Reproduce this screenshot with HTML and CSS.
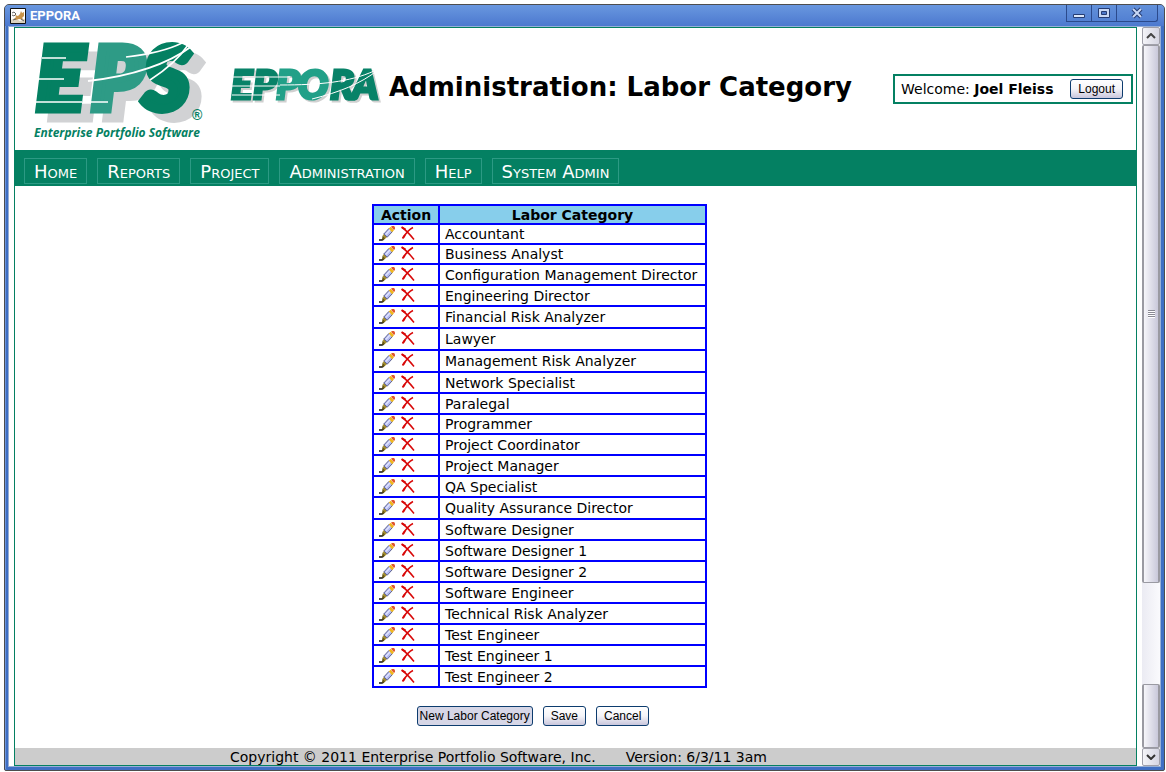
FILE: index.html
```html
<!DOCTYPE html>
<html lang="en">
<head>
<meta charset="utf-8">
<title>EPPORA</title>
<link rel="stylesheet" href="styles.css">
</head>
<body>
<svg class="defs" aria-hidden="true">
  <symbol id="edit" viewBox="0 0 16 15">
    <path d="M0 14H3L5 13" fill="none" stroke="#111" stroke-width="1.500"/>
    <path d="M3 13.500L3.600 9.400L6.600 12L4.500 14Z" fill="#6b5a10"/>
    <path d="M3.800 9.600L5.200 7.500L8.500 10.600L6.400 12.500Z" fill="#a8902a"/>
    <path d="M4.800 8L10.200 2.200L13.600 5.400L8.200 11.200Z" fill="#b3baf0" stroke="#5c6192"/>
    <path d="M6.800 8.400L11.400 3.600" stroke="#dfe2ff" stroke-width="1.500"/>
    <path d="M9.800 2.600L11.600 .8L15 4.200L13 6.200Z" fill="#f0b81c"/>
    <path d="M12 .8L13 0H15L16 1.200V3L15 4Z" fill="#e0552f"/>
  </symbol>
  <symbol id="delete" viewBox="0 0 14 15">
    <path d="M1 1.500C5 4 8.500 8 13 13.500M12 1.500C7 4 4 8.500 1.500 12.500" fill="none" stroke="#d80808" stroke-width="1.500"/>
    <path d="M.5 1L4.500 3.500M2 12L4 9" stroke="#d80808" stroke-width="2"/>
  </symbol>
</svg>
<div class="window">
  <div class="titlebar">
    <svg class="app-icon" viewBox="0 0 16 16" aria-hidden="true">
      <path d="M.5.5H15.500V15.500H.5Z" fill="#fff" stroke="#111"/>
      <path d="M1 12L5 10L10 13L15 11V15H1Z" fill="#dcd3c0"/>
      <path d="M4 11L6 9L5 7L8 8L10 6L11 3L12 5L14 4V8L12 10L14 12L9 11L6 12Z" fill="#c9934a"/>
      <path d="M2 5L4 4L6 6L4 8L2 7M3 12L6 11M11 11L14 13" fill="none" stroke="#666"/>
    </svg>
    <span class="window-title">EPPORA</span>
    <div class="window-controls">
      <button aria-label="Minimize"><svg viewBox="0 0 12 12"><path d="M.5 7.500H11.500V10.500H.5Z" fill="#dbe7fa" stroke="#253c73"/></svg></button>
      <button aria-label="Maximize"><svg viewBox="0 0 12 12"><path d="M.5 1.500H11.500V10.500H.5Z" fill="#c8d8f5" stroke="#253c73"/><path d="M3.500 4.500H8.500V7.500H3.500Z" fill="#4d78ca" stroke="#253c73"/></svg></button>
      <button class="close" aria-label="Close"><svg viewBox="0 0 12 12"><path d="M2 2L10 10M10 2L2 10" stroke="#253c73" stroke-width="4"/><path d="M2 2L10 10M10 2L2 10" stroke="#c8d8f5" stroke-width="2"/></svg></button>
    </div>
  </div>
  <div class="viewport">
    <div class="page">
      <header class="header">
        <div class="brand">
          <svg class="eps" viewBox="0 0 178 88" role="img" aria-label="EPS">
            <text class="eps-letters" x="5" y="73">E<tspan class="light" x="60">P</tspan><tspan x="112">S</tspan></text>
            <g fill="none" stroke="#fff" stroke-width="1.600">
              <path d="M10 22H34M7 43H32M4 66H50M54 66H76"/>
              <path d="M94 21C112 19 134 15 150 7"/>
              <path d="M56 45C82 42 128 34 160 10" stroke-width="2"/>
              <path d="M118 44C132 35 146 24 156 9"/>
            </g>
            <text class="registered" x="160" y="84">®</text>
          </svg>
          <div class="tagline">Enterprise Portfolio Software</div>
        </div>
        <svg class="eppora" viewBox="0 0 156 40" role="img" aria-label="EPPORA">
          <text class="word" x="1" y="33">E<tspan x="23">P</tspan><tspan class="light" x="46">P</tspan><tspan class="light" x="68">O</tspan><tspan x="100">R</tspan><tspan x="122">A</tspan></text>
          <path d="M2 11H60M2 20H50M2 29H50M50 19C90 19 120 16 144 5M82 33C110 26 130 18 148 4" fill="none" stroke="#fff"/>
        </svg>
        <h1>Administration: Labor Category</h1>
        <div class="welcome"><span>Welcome: <b>Joel Fleiss</b></span><button class="btn">Logout</button></div>
      </header>
      <nav class="nav">
        <a href="#">Home</a><a href="#">Reports</a><a href="#">Project</a><a href="#">Administration</a><a href="#">Help</a><a href="#">System Admin</a>
      </nav>
      <main class="main">
        <table class="categories">
          <thead><tr><th scope="col" class="action">Action</th><th scope="col">Labor Category</th></tr></thead>
          <tbody id="rows"></tbody>
        </table>
        <div class="actions">
          <button class="btn active">New Labor Category</button><button class="btn">Save</button><button class="btn">Cancel</button>
        </div>
      </main>
      <footer class="footer"><span>Copyright © 2011 Enterprise Portfolio Software, Inc.</span><span>Version: 6/3/11 3am</span></footer>
    </div>
    <div class="scrollbar" aria-hidden="true">
      <div class="arrow"><svg viewBox="0 0 10 6"><path d="M1 5L5 1L9 5" fill="none" stroke="#444" stroke-width="2"/></svg></div>
      <div class="thumb"><i class="grip"></i></div>
      <div class="track"></div>
      <div class="thumb lower"></div>
      <div class="arrow"><svg viewBox="0 0 10 6"><path d="M1 1L5 5L9 1" fill="none" stroke="#333" stroke-width="2"/></svg></div>
    </div>
  </div>
</div>
<script src="app.js"></script>
</body>
</html>
```
FILE: styles.css
```css
* { box-sizing: border-box; }
body { margin: 0; background: #fff; font-family: Verdana, "DejaVu Sans", sans-serif; font-size: 14px; color: #000; }
button { font: inherit; cursor: pointer; }
.defs { display: none; }
.window {
  min-height: calc(100vh - 5px); margin: 4px 1px 1px 4px; display: flex; flex-direction: column;
  border: 1px solid #4d4d4d; border-radius: 5px 5px 2px 2px; background: #3f6fc4; padding: 0 3px 3px;
  box-shadow: inset 1px 0 #6f97da;
}
.titlebar { display: flex; align-items: center; height: 21px; margin: 0 -3px; padding-left: 5px; gap: 4px; border-radius: 4px 4px 0 0; background: linear-gradient(#6997df, #4c79cf); }
.app-icon { width: 16px; height: 16px; }
.window-title { font: bold 13px Roboto, sans-serif; color: #fff; flex: 1; }
.window-controls { display: flex; align-self: flex-start; margin-right: 6px; }
.window-controls button { width: 25px; height: 17px; padding: 0; border: solid #2b4a8c; border-width: 0 0 1px 1px; background: linear-gradient(#6391da, #5280d2); display: grid; place-items: center; }
.window-controls button.close { width: 42px; border-right-width: 1px; border-radius: 0 0 3px 0; }
.window-controls svg { width: 12px; height: 12px; }
.viewport { flex: 1; display: flex; background: #fff; border: 1px solid #96afd6; }
.page { flex: 1; margin-left: 5px; border: 1px solid #048062; display: flex; flex-direction: column; }
.header { display: flex; align-items: flex-start; height: 122px; padding: 8px 3px 0 17px; }
.brand { width: 198px; }
.eps { display: block; width: 178px; height: 88px; overflow: visible; }
.eps-letters { font: italic 900 86px Lato, sans-serif; fill: #048062; stroke: #048062; stroke-width: 9px; filter: drop-shadow(12px 9px #d1d2d4); }
.eps-letters .light { fill: #2e9b86; stroke: #2e9b86; }
.eps .registered { font: bold 14px "Liberation Sans", sans-serif; fill: #048062; }
.tagline { padding-left: 2px; font: italic bold 12px/18px "Open Sans", sans-serif; color: #048062; white-space: nowrap; }
.eppora { width: 156px; height: 40px; margin-top: 30px; overflow: visible; }
.word { font: italic 900 40px Lato, sans-serif; fill: #088268; stroke: #088268; stroke-width: 3px; filter: drop-shadow(2px 2px #d0d0d0); }
.word .light { fill: #22a088; stroke: #22a088; }
h1 { margin: 35px 0 0 3px; font-size: 26px; line-height: 32px; white-space: nowrap; }
.welcome { margin: 38px 0 0 auto; width: 240px; height: 30px; padding: 0 8px 0 6px; border: 2px solid #048062; display: flex; align-items: center; justify-content: space-between; white-space: nowrap; }
.btn { height: 20px; padding: 0 7px; border: 1px solid #0d3c6e; border-radius: 3px; background: linear-gradient(#fff, #f4f4f8 50%, #c9c6dc); font: 12px/16px "Liberation Sans", Arial, sans-serif; color: #000; white-space: nowrap; }
.btn.active { padding: 0 2px; background: #d6d6e6; }
.nav { display: flex; gap: 10px; height: 36px; padding: 8px 9px 2px; background: #048062; }
.nav a { height: 26px; padding: 0 9px; border: 1px solid #2c9a84; color: #fff; font-size: 18px; line-height: 25px; font-variant: small-caps; text-decoration: none; white-space: nowrap; }
.main { flex: 1; padding: 18px 72px 0 0; display: flex; flex-direction: column; align-items: center; }
.categories { width: 335px; border-collapse: collapse; }
.categories th, .categories td { border: 2px solid #00f; padding: 0 5px; line-height: 16px; text-align: left; white-space: nowrap; }
.categories th { height: 19px; background: #87ceeb; text-align: center; }
.categories .action { width: 66px; padding: 0 4px; }
.categories td { height: 21px; }
.categories .short td { height: 20px; }
.categories .tall td { height: 22px; }
.tools { display: flex; align-items: flex-start; gap: 6px; height: 16px; }
.tools button { height: 15px; padding: 0; border: 0; background: none; }
.tools svg { display: block; height: 15px; }
.edit-icon { width: 16px; }
.delete-icon { width: 14px; }
.actions { display: flex; gap: 10px; padding: 18px 13px 20px 0; }
.footer { display: flex; gap: 30px; height: 17px; padding-left: 215px; background: #ccc; line-height: 18px; white-space: nowrap; }
.scrollbar { width: 18px; margin-left: 5px; display: flex; flex-direction: column; background: #f4f4f8; }
.arrow { height: 18px; border: 1px solid #a0a0aa; border-radius: 2px; background: linear-gradient(90deg, #f4f4f8, #d5d5e2); display: grid; place-items: center; }
.arrow svg { width: 10px; height: 6px; }
.thumb { flex: 541; border: solid #9a9aa2; border-width: 1px 2px; border-radius: 2px; background: linear-gradient(90deg, #f6f6fa, #c9c8da); display: grid; place-items: center; }
.track { flex: 101; background: linear-gradient(90deg, #ebebf3, #fafafd); }
.thumb.lower { flex: 63; }
.grip { width: 7px; height: 8px; background: repeating-linear-gradient(#8a8a94 0 1px, #fff 1px 2px); }
```
FILE: app.js
```js
const categories = [
  ["Accountant", "short"], ["Business Analyst", "short"], ["Configuration Management Director"],
  ["Engineering Director"], ["Financial Risk Analyzer", "tall"], ["Lawyer", "tall"],
  ["Management Risk Analyzer", "tall"], ["Network Specialist"], ["Paralegal"],
  ["Programmer", "short"], ["Project Coordinator"], ["Project Manager"], ["QA Specialist"],
  ["Quality Assurance Director", "tall"], ["Software Designer"], ["Software Designer 1"],
  ["Software Designer 2"], ["Software Engineer"], ["Technical Risk Analyzer"],
  ["Test Engineer"], ["Test Engineer 1"], ["Test Engineer 2"]
];
document.getElementById("rows").innerHTML = categories.map(([name, size = ""]) => `
  <tr class="${size}">
    <td><div class="tools">
      <button aria-label="Edit ${name}"><svg class="edit-icon"><use href="#edit"/></svg></button>
      <button aria-label="Delete ${name}"><svg class="delete-icon"><use href="#delete"/></svg></button>
    </div></td>
    <td>${name}</td>
  </tr>`).join("");
```
